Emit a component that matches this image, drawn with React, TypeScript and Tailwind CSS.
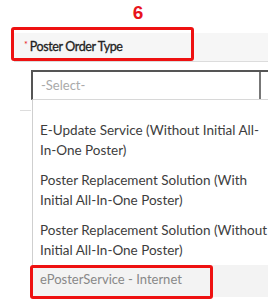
import React from 'react';

const options = [
  ['E-Update Service (Without Initial All-', 'In-One Poster)'],
  ['Poster Replacement Solution (With', 'Initial All-In-One Poster)'],
  ['Poster Replacement Solution (Without', 'Initial All-In-One Poster)'],
];

export default function App() {
  return (
    <div className="relative h-[306px] w-[268px] overflow-hidden bg-white font-['Lato',sans-serif]">
      {/* step number */}
      <div className="flex h-[27px] justify-center pl-[8px] pt-[1px]">
        <span className="font-['Liberation_Sans',sans-serif] text-[19px] font-bold leading-[24px] text-[#e8141c]">6</span>
      </div>

      {/* field header */}
      <div className="ml-[14px] mt-[6px] flex h-[29px] items-center border-b border-[#dcdcdc] bg-[#f6f6f6] pl-[10px]">
        <span className="mr-[2px] mt-[-4px] text-[9px] text-[#e8141c]">*</span>
        <span className="whitespace-nowrap text-[12.5px] tracking-[-0.4px] text-[#222] [-webkit-text-stroke:0.3px_#222]">Poster Order Type</span>
      </div>

      {/* select box */}
      <div className="ml-[31px] mt-[8px] flex h-[30px] border-l-2 border-t-2 border-[#555] border-b border-b-[#d8d8d8]">
        <div className="flex w-[228px] items-center border-r-2 border-[#777] pl-[8px] text-[13px] text-[#aaa]">-Select-</div>
        <div className="flex-1" />
      </div>

      {/* dropdown */}
      <div className="relative ml-[32px] border-l border-[#cfcfcf] pt-[15px]">
        {options.map((lines, i) => (
          <div key={i} className="whitespace-nowrap px-[7px] py-[5px] text-[13.5px] leading-[20px] text-[#3d3d3d]">
            {lines[0]}
            <br />
            {lines[1]}
          </div>
        ))}
        <div className="whitespace-nowrap bg-[#f3f3f3] px-[7px] pb-[8px] pt-[4px] text-[13px] leading-[20px] text-[#888]">ePosterService - Internet</div>
      </div>

      {/* stray divider left of dropdown */}
      <div className="absolute left-[20px] top-[110px] h-px w-[11px] bg-[#ddd]" />

      {/* annotation boxes */}
      <div className="absolute left-[11px] top-[27px] h-[34px] w-[183px] rounded-[3px] border-[3px] border-[#ee1111]" />
      <div className="absolute left-[30px] top-[265px] h-[34px] w-[183px] rounded-[3px] border-[3px] border-[#ee1111]" />
    </div>
  );
}
